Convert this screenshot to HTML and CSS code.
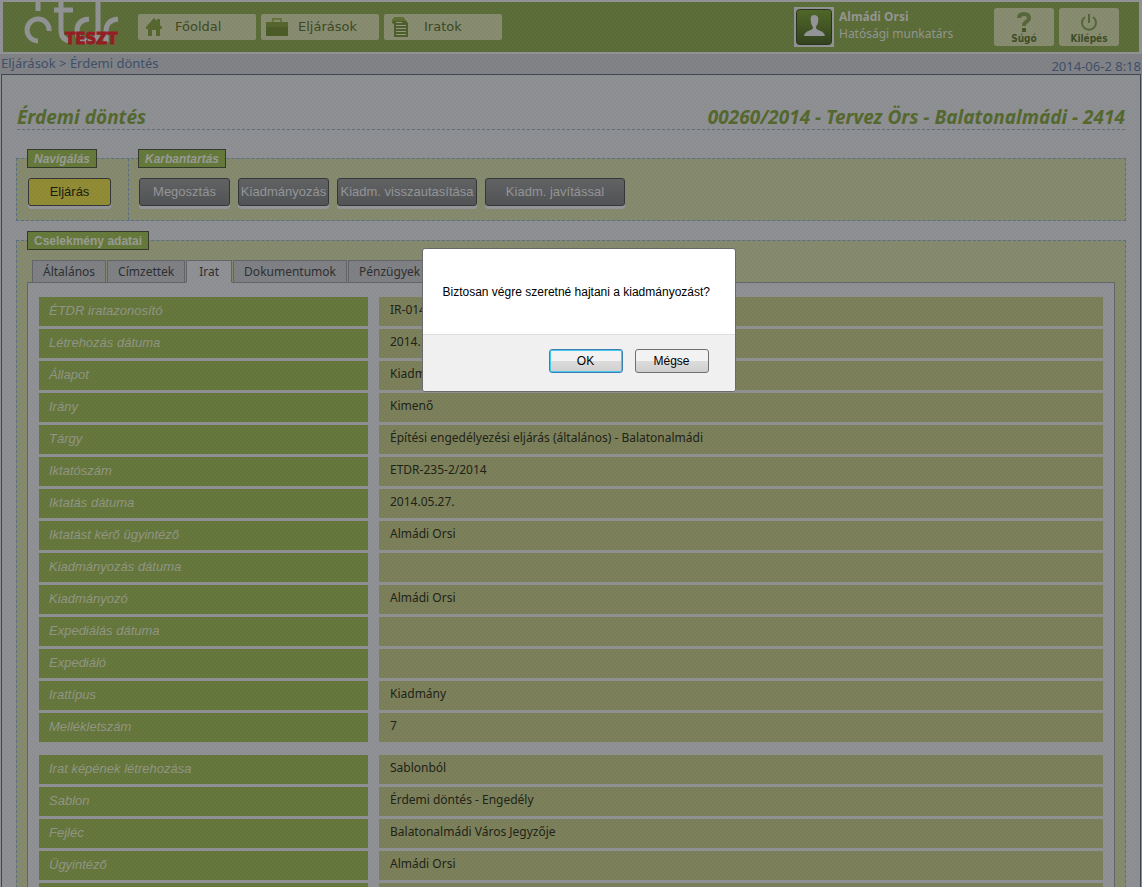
FILE: index.html
```html
<!DOCTYPE html>
<html lang="hu">
<head>
<meta charset="utf-8">
<title>ÉTDR – Érdemi döntés</title>
<link rel="stylesheet" href="styles.css">
</head>
<body>
<header class="topbar">
  <div class="logo">
    <svg width="98" height="50" viewBox="0 0 98 50" fill="none" stroke="#929394" stroke-width="5" aria-hidden="true">
      <path d="M15 -2V9M26 29A11 11 0 1 0 15 39M38 -2V28Q38 39 49 39M31 8H50M66 17Q54 18 54 29Q54 39 64 39M75 -2V29Q75 39 65 39M83 40V30Q83 18 95 17"/>
    </svg>
    <span class="logo-test">TESZT</span>
  </div>
  <nav class="mainnav">
    <a class="nav-item" href="#"><svg width="18" height="20" viewBox="0 0 18 20" aria-hidden="true"><path fill="#56682f" d="M1 10L9 1L12 4V2H15V8L17 10V12H15V19H11V13H7V19H3V12H1Z"/></svg><span>Főoldal</span></a>
    <a class="nav-item nav-cases" href="#"><svg width="24" height="20" viewBox="0 0 24 20" aria-hidden="true"><path fill="none" stroke="#68753d" stroke-width="2" d="M8 5V2H16V5"/><path fill="#4d5d29" d="M1 5H23V19H1Z"/><path fill="#56672d" d="M1 5H23V10H1Z"/></svg><span>Eljárások</span></a>
    <a class="nav-item nav-files" href="#"><svg width="18" height="22" viewBox="0 0 18 22" aria-hidden="true"><path fill="#4f602c" d="M4 1H12L17 7V21H3V8L1 7V4Z"/><path fill="#5f7034" d="M4 1H12L15 5H2L1 7V4Z"/><path stroke="#929684" stroke-width="1" d="M5 6.500H11M5 9.500H15M5 12.500H15M5 15.500H15M5 18.500H15"/></svg><span>Iratok</span></a>
  </nav>
  <div class="user">
    <svg class="avatar" width="40" height="40" viewBox="0 0 40 40" aria-hidden="true"><defs><linearGradient id="shade" x2="0" y2="1"><stop offset="0" stop-color="#52682a"/><stop offset="1" stop-color="#34431f"/></linearGradient></defs><rect width="40" height="40" fill="#929394"/><rect x="2.500" y="2.500" width="35" height="35" rx="3" fill="url(#shade)" stroke="#29351a"/><path fill="#949598" d="M20 8C24 8 25 11 24 15C24 18 22 18 22 21C23 24 30 23 31 29H10C11 23 18 24 19 21C19 19 17 18 17 15C16 11 17 8 20 8Z"/></svg>
    <div class="user-text"><strong>Almádi Orsi</strong><span>Hatósági munkatárs</span></div>
  </div>
  <div class="tools">
    <button class="tool" type="button"><svg width="20" height="22" viewBox="0 0 20 22" aria-hidden="true"><path fill="none" stroke="#59683a" stroke-width="4" d="M5 7Q5 3 10 3Q15 3 15 7Q15 9 12 11Q10 12 10 15"/><path fill="#46572b" d="M8 17H12V21H8Z"/></svg><span>Súgó</span></button>
    <button class="tool" type="button"><svg width="20" height="22" viewBox="0 0 20 22" fill="none" stroke="#56663a" stroke-width="2" aria-hidden="true"><path d="M10 3V12M6 6A7 7 0 1 0 14 6"/></svg><span>Kilépés</span></button>
  </div>
</header>
<div class="crumbs">
  <div><a href="#">Eljárások</a> &gt; <a href="#">Érdemi döntés</a></div>
  <time>2014-06-2 8:18</time>
</div>
<main class="page">
  <div class="title"><h1>Érdemi döntés</h1><h1>00260/2014 - Tervez Örs - Balatonalmádi - 2414</h1></div>
  <div class="toolbar">
    <section class="group">
      <h2 class="tag tag-italic">Navigálás</h2>
      <div class="actions"><button class="action action-main" type="button">Eljárás</button></div>
    </section>
    <section class="group">
      <h2 class="tag tag-italic">Karbantartás</h2>
      <div class="actions">
        <button class="action" type="button">Megosztás</button>
        <button class="action" type="button">Kiadmányozás</button>
        <button class="action action-wide" type="button">Kiadm. visszautasítása</button>
        <button class="action action-wide" type="button">Kiadm. javítással</button>
      </div>
    </section>
  </div>
  <section class="details">
    <h2 class="tag">Cselekmény adatai</h2>
    <div class="tabs" role="tablist">
      <button class="tab" role="tab" type="button">Általános</button>
      <button class="tab" role="tab" type="button">Címzettek</button>
      <button class="tab tab-active" role="tab" type="button" aria-selected="true">Irat</button>
      <button class="tab" role="tab" type="button">Dokumentumok</button>
      <button class="tab" role="tab" type="button">Pénzügyek</button>
    </div>
    <div class="panel" role="tabpanel">
      <table class="data">
        <tr><th scope="row">ÉTDR iratazonosító</th><td>IR-014</td></tr>
        <tr><th scope="row">Létrehozás dátuma</th><td>2014.</td></tr>
        <tr><th scope="row">Állapot</th><td>Kiadm</td></tr>
        <tr><th scope="row">Irány</th><td>Kimenő</td></tr>
        <tr><th scope="row">Tárgy</th><td>Építési engedélyezési eljárás (általános) - Balatonalmádi</td></tr>
        <tr><th scope="row">Iktatószám</th><td>ETDR-235-2/2014</td></tr>
        <tr><th scope="row">Iktatás dátuma</th><td>2014.05.27.</td></tr>
        <tr><th scope="row">Iktatást kérő ügyintéző</th><td>Almádi Orsi</td></tr>
        <tr><th scope="row">Kiadmányozás dátuma</th><td></td></tr>
        <tr><th scope="row">Kiadmányozó</th><td>Almádi Orsi</td></tr>
        <tr><th scope="row">Expediálás dátuma</th><td></td></tr>
        <tr><th scope="row">Expediáló</th><td></td></tr>
        <tr><th scope="row">Irattípus</th><td>Kiadmány</td></tr>
        <tr><th scope="row">Mellékletszám</th><td>7</td></tr>
      </table>
      <table class="data">
        <tr><th scope="row">Irat képének létrehozása</th><td>Sablonból</td></tr>
        <tr><th scope="row">Sablon</th><td>Érdemi döntés - Engedély</td></tr>
        <tr><th scope="row">Fejléc</th><td>Balatonalmádi Város Jegyzője</td></tr>
        <tr><th scope="row">Ügyintéző</th><td>Almádi Orsi</td></tr>
        <tr><th scope="row"></th><td></td></tr>
      </table>
    </div>
  </section>
</main>
<div class="backdrop">
  <div class="dialog" role="alertdialog" aria-modal="true" aria-labelledby="question">
    <p class="question" id="question">Biztosan végre szeretné hajtani a kiadmányozást?</p>
    <div class="dialog-actions">
      <button class="choice choice-default" type="button">OK</button>
      <button class="choice" type="button">Mégse</button>
    </div>
  </div>
</div>
</body>
</html>
```
FILE: styles.css
```css
* { box-sizing: border-box; }

body {
  margin: 0;
  height: 100vh;
  overflow: hidden;
  display: flex;
  flex-direction: column;
  background: #8f9093;
  font-family: "Noto Sans", "Open Sans", sans-serif;
  font-size: 12px;
  color: #222318;
}

button { font: inherit; color: inherit; cursor: pointer; }
a { color: inherit; text-decoration: none; }
h1, h2, p { margin: 0; }

.topbar {
  flex: none;
  display: flex;
  height: 54px;
  border: 2px solid #929394;
  border-left-width: 3px;
  border-right-width: 3px;
  background: #5c6e39;
}

.logo { position: relative; width: 135px; padding-left: 20px; }
.logo-test {
  position: absolute;
  left: 62px;
  top: 28px;
  font: 900 15px/18px "DejaVu Sans", sans-serif;
  color: #951f25;
  -webkit-text-stroke: 1px #951f25;
}

.mainnav { flex: 1; display: flex; gap: 5px; padding-top: 12px; }
.nav-item {
  display: flex;
  align-items: center;
  gap: 12px;
  width: 118px;
  height: 26px;
  padding-left: 7px;
  border-radius: 2px;
  background: #888d72;
  color: #3d4a24;
  font: 13px/20px "DejaVu Sans", sans-serif;
}
.nav-cases { padding-left: 4px; gap: 9px; }
.nav-files { gap: 15px; }

.user { display: flex; gap: 5px; width: 200px; padding-top: 5px; color: #959691; }
.user-text { display: flex; flex-direction: column; font-size: 12px; line-height: 17px; padding-top: 1px; }

.tools { display: flex; gap: 5px; padding: 6px 20px 0 0; }
.tool {
  display: flex;
  flex-direction: column;
  align-items: center;
  width: 60px;
  height: 38px;
  padding: 3px 0 0;
  border: 0;
  border-radius: 3px;
  background: #888d72;
  color: #3f4e26;
  font: bold 10px/11px "DejaVu Sans Condensed", "DejaVu Sans", sans-serif;
}
.tool svg { flex: none; }

.crumbs {
  flex: none;
  display: flex;
  justify-content: space-between;
  height: 20px;
  padding: 0 1px;
  background: #828386;
  color: #40506c;
  font-size: 13px;
  line-height: 19px;
}
.crumbs time { padding-top: 3px; }

.page {
  flex: 1 0 auto;
  margin: 0 1px;
  padding: 30px 14px 0;
  border: 1px solid #3f4854;
}

.title {
  display: flex;
  justify-content: space-between;
  height: 25px;
  margin: 0 1px 28px;
  border-bottom: 1px dashed #66717b;
}
.title h1 { font-size: 19px; line-height: 25px; font-style: italic; color: #55692f; }

.toolbar {
  display: flex;
  height: 63px;
  margin-bottom: 19px;
  border: 1px dashed #5b7088;
  background: #868b70;
}
.group { padding: 0 17px 0 10px; }
.group + .group { padding-left: 9px; border-left: 1px dashed #5b7088; }

.tag {
  width: max-content;
  height: 19px;
  margin-top: -10px;
  padding: 0 6px;
  border: 1px solid #333b2b;
  background: #667a3c;
  color: #9a9c96;
  font: bold 12px/18px "Liberation Sans", Arial, sans-serif;
}
.tag-italic { font-style: italic; }

.actions { display: flex; gap: 8px; padding: 10px 0 0 1px; }
.action {
  width: 91px;
  height: 28px;
  padding: 0;
  border: 1px solid #36373a;
  border-radius: 3px;
  box-shadow: 0 3px 0 #95969a;
  background: linear-gradient(#626365, #535456);
  color: #959699;
  font: 13px/26px "Liberation Sans", Arial, sans-serif;
}
.action-wide { width: 140px; }
.action-main { width: 83px; background: #918c35; color: #1d1c10; }

.details { border: 1px dashed #5b7088; background: #868b70; padding: 0 10px; }

.tabs { display: flex; gap: 1px; padding: 10px 0 0 5px; }
.tab {
  height: 23px;
  margin-bottom: -1px;
  padding: 0 10px;
  border: 1px solid #646569;
  background: #808184;
  color: #2f3033;
  line-height: 20px;
}
.tab-active { padding: 0 12px; border-bottom-color: #909194; background: #909194; }

.panel { padding: 11px 0; border: 1px solid #646569; background: #909194; }
.data {
  width: 100%;
  table-layout: fixed;
  border-collapse: separate;
  border-spacing: 11px 3px;
}
.data + .data { margin-top: 7px; }
.data th, .data td {
  height: 29px;
  padding: 0 10px;
  text-align: left;
  vertical-align: top;
}
.data th {
  width: 329px;
  background: #66783d;
  color: #929685;
  font: italic 13px/28px "Liberation Sans", Arial, sans-serif;
}
.data td { padding-left: 11px; background: #7c815b; line-height: 26px; }

.backdrop {
  position: fixed;
  inset: 0;
  display: flex;
  justify-content: center;
  align-items: flex-start;
  padding: 248px 0 0 15px;
  background: repeating-conic-gradient(rgba(0, 0, 0, 0.02) 0 25%, transparent 0 50%) 0 0 / 4px 4px;
}
.dialog {
  width: 314px;
  border: 1px solid #67696b;
  border-radius: 3px;
  background: #fff;
  color: #000;
  font: 12px/16px "Liberation Sans", Arial, sans-serif;
}
.question { padding: 35px 20px 34px; white-space: nowrap; }
.dialog-actions {
  display: flex;
  justify-content: flex-end;
  gap: 12px;
  padding: 14px 26px 18px;
  border-top: 1px solid #dfdfdf;
  border-radius: 0 0 3px 3px;
  background: #f0f0f0;
}
.choice {
  width: 74px;
  height: 24px;
  padding: 0;
  border: 1px solid #707070;
  border-radius: 3px;
  background: linear-gradient(#f2f2f2 0 50%, #dcdcdc 50%, #cfcfcf);
}
.choice-default { border-color: #3c7fb1; box-shadow: inset 0 0 0 1px #48c8f0; }
```
